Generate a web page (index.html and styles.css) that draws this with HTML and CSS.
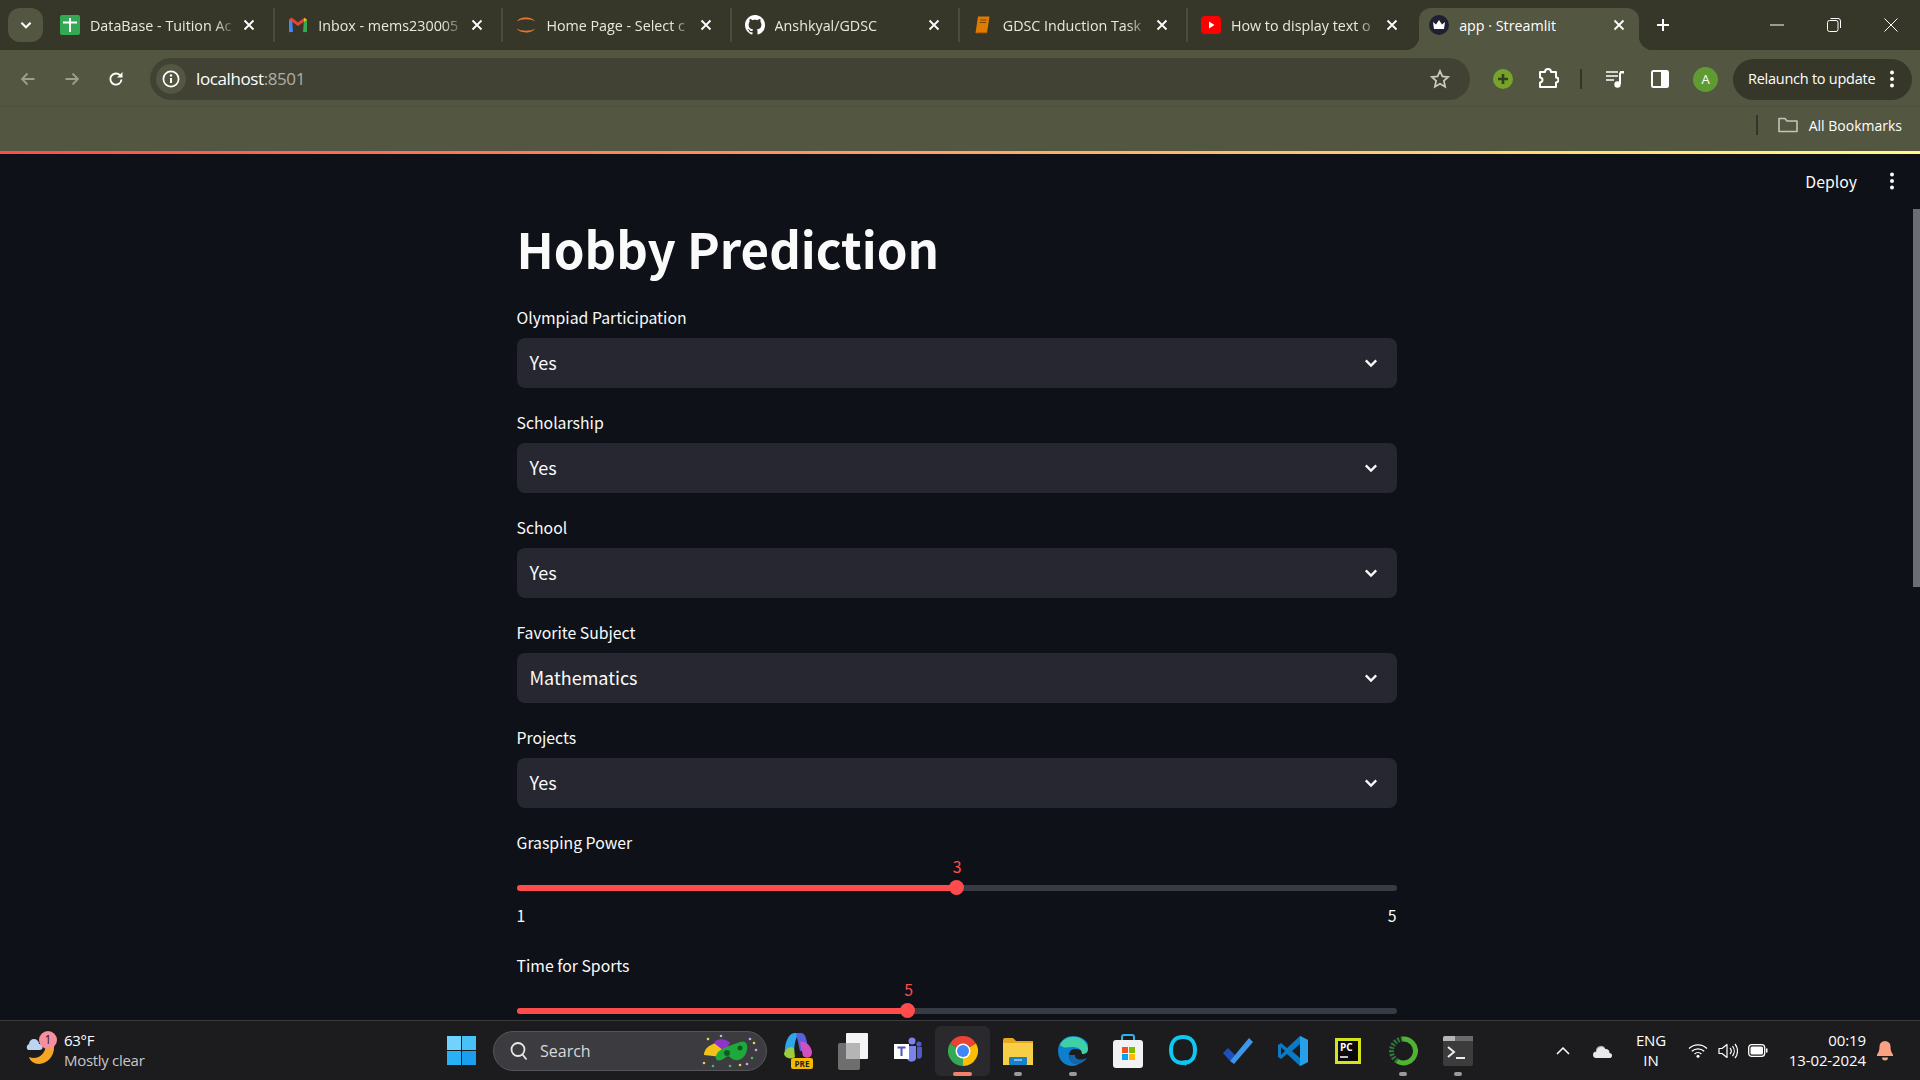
FILE: index.html
```html
<!DOCTYPE html>
<html lang="en">

<head>
    <meta charset="UTF-8">
    <title>app · Streamlit</title>
    <link rel="stylesheet" href="styles.css">
</head>

<body>
    <svg class="sprite" width="0" height="0">
        <symbol id="x" viewBox="0 0 14 14"><path d="M2.5 2.5l9 9M11.5 2.5l-9 9" fill="none" stroke="currentColor" stroke-width="1.8"/></symbol>
        <symbol id="chev" viewBox="0 0 16 16"><path d="M2.800 5.400L8 10.600l5.200-5.200" fill="none" stroke="currentColor" stroke-width="2.300"/></symbol>
        <symbol id="dots" viewBox="0 0 6 20"><circle cx="3" cy="3.5" r="2"/><circle cx="3" cy="10" r="2"/><circle cx="3" cy="16.5" r="2"/></symbol>
    </svg>

    <!-- browser chrome -->
    <div class="tabstrip">
        <div class="tabsearch">
            <svg width="14" height="14"><use href="#chev"/></svg>
        </div>
        <div class="tab">
            <svg class="favicon" viewBox="0 0 20 20"><rect width="20" height="20" rx="2" fill="#34a853"/><path d="M3 7.5h14M10 3v14" stroke="#fff" stroke-width="2"/></svg>
            <span class="tab-title">DataBase - Tuition Ac</span>
            <svg class="tab-close"><use href="#x"/></svg>
        </div>
        <div class="tab">
            <svg class="favicon" viewBox="0 0 20 20"><path d="M1 17V5l3-1.500 1 13.500H2.500A1.500 1.500 0 0 1 1 17z" fill="#4285f4"/><path d="M19 17V5l-3-1.500-1 13.500h2.500A1.500 1.500 0 0 0 19 17z" fill="#34a853"/><path d="M1 4.500L10 11l9-6.500-2.500-2-6.500 5-6.500-5z" fill="#ea4335"/><path d="M16 3l3 1.500L16 7z" fill="#fbbc04"/></svg>
            <span class="tab-title">Inbox - mems230005</span>
            <svg class="tab-close"><use href="#x"/></svg>
        </div>
        <div class="tab">
            <svg class="favicon" viewBox="0 0 20 20"><path d="M1 6.500C3 1.500 16 1 19 6.500 15 3.500 5 3.500 1 6.500zM1 13.500C3 18.500 16 19 19 13.500 15 16.500 5 16.500 1 13.500z" fill="#e8762c"/></svg>
            <span class="tab-title">Home Page - Select c</span>
            <svg class="tab-close"><use href="#x"/></svg>
        </div>
        <div class="tab">
            <svg class="favicon" viewBox="0 0 16 16"><path fill="#fff" d="M8 0C3.580 0 0 3.580 0 8c0 3.540 2.290 6.530 5.470 7.590.4.070.55-.17.55-.38 0-.19-.01-.82-.01-1.490-2.010.37-2.530-.49-2.690-.94-.09-.23-.48-.94-.82-1.130-.28-.15-.68-.52-.01-.53.63-.01 1.080.58 1.230.82.720 1.210 1.870.87 2.330.66.070-.52.280-.87.510-1.070-1.780-.2-3.640-.89-3.640-3.950 0-.87.310-1.590.820-2.150-.08-.2-.36-1.020.08-2.120 0 0 .67-.21 2.200.82.640-.18 1.320-.27 2-.27s1.360.09 2 .27c1.530-1.040 2.200-.82 2.200-.82.440 1.100.16 1.920.08 2.120.51.560.82 1.270.82 2.150 0 3.070-1.870 3.750-3.650 3.950.29.250.54.730.54 1.480 0 1.070-.01 1.930-.01 2.200 0 .21.150.46.550.38A8.010 8.010 0 0 0 16 8c0-4.420-3.580-8-8-8z"/></svg>
            <span class="tab-title">Anshkyal/GDSC</span>
            <svg class="tab-close"><use href="#x"/></svg>
        </div>
        <div class="tab">
            <svg class="favicon" viewBox="0 0 20 20"><path d="M5 1.500h11.500L14 18H2.500z" fill="#e07b00"/><path d="M4 17.500h10l.5 1H3z" fill="#8a4b00"/><path d="M7 5h6.500M6.500 7.500H13" stroke="#7a4300" stroke-width="1"/></svg>
            <span class="tab-title">GDSC Induction Task</span>
            <svg class="tab-close"><use href="#x"/></svg>
        </div>
        <div class="tab tab-last">
            <svg class="favicon" viewBox="0 0 20 20"><rect y="1" width="20" height="18" rx="4" fill="#f00"/><path d="M8 6.500v7l5.500-3.500z" fill="#fff"/></svg>
            <span class="tab-title">How to display text o</span>
            <svg class="tab-close"><use href="#x"/></svg>
        </div>
        <div class="tab tab-active">
            <svg class="favicon" viewBox="0 0 20 20"><circle cx="10" cy="10" r="10" fill="#1f2030"/><path d="M4 7l3 2.500L10 5l3 4.500L16 7l-1 7H5z" fill="#fff"/></svg>
            <span class="tab-title">app · Streamlit</span>
            <svg class="tab-close"><use href="#x"/></svg>
        </div>
        <svg class="newtab" width="14" height="14" viewBox="0 0 14 14"><path d="M7 1v12M1 7h12" stroke="#fff" stroke-width="2"/></svg>
        <div class="winbtns">
            <svg width="14" height="14" viewBox="0 0 14 14"><path d="M0 7h14" stroke="#fff" stroke-width="1"/></svg>
            <svg width="14" height="14" viewBox="0 0 14 14"><rect x=".5" y="2.500" width="10.500" height="11" rx="2" fill="none" stroke="#fff"/><path d="M3.500.5h7.500a2.500 2.500 0 0 1 2.500 2.500v7" fill="none" stroke="#fff"/></svg>
            <svg width="14" height="14" viewBox="0 0 14 14"><path d="M.5.5l13 13M13.500.5l-13 13" stroke="#fff" stroke-width="1"/></svg>
        </div>
    </div>

    <div class="toolbar">
        <div class="navbtns">
            <svg width="16" height="16" viewBox="0 0 16 16"><path d="M14.500 8H2M7.500 2.500L2 8l5.500 5.500" fill="none" stroke="#9c9e8e" stroke-width="1.800"/></svg>
            <svg width="16" height="16" viewBox="0 0 16 16"><path d="M1.500 8H14M8.500 2.500L14 8l-5.500 5.500" fill="none" stroke="#9c9e8e" stroke-width="1.800"/></svg>
            <svg width="16" height="16" viewBox="0 0 16 16"><path d="M13.500 8.500A5.600 5.600 0 1 1 12 4.200" fill="none" stroke="#fff" stroke-width="1.900"/><path d="M14.500 1v5.500H9z" fill="#fff"/></svg>
        </div>
        <div class="omnibox">
            <div class="infochip">
                <svg width="18" height="18" viewBox="0 0 18 18"><circle cx="9" cy="9" r="7.600" fill="none" stroke="#fff" stroke-width="1.700"/><path d="M9 8v5" stroke="#fff" stroke-width="2"/><circle cx="9" cy="5.400" r="1.200" fill="#fff"/></svg>
            </div>
            <span class="url">localhost<span class="url-port">:8501</span></span>
            <svg class="star" width="20" height="20" viewBox="0 0 20 20"><path d="M10 2l2.400 5.400 5.800.6-4.300 3.900 1.200 5.800L10 14.800l-5.100 2.900 1.200-5.800L1.800 8l5.800-.6z" fill="none" stroke="#c9cabd" stroke-width="1.800"/></svg>
        </div>
        <div class="actions">
            <svg class="act-ext" width="20" height="20" viewBox="0 0 20 20"><circle cx="10" cy="10" r="10" fill="#76a32a"/><path d="M10 5v10M5 10h10" stroke="#33401a" stroke-width="2.600"/></svg>
            <svg class="act-puzzle" width="22" height="22" viewBox="0 0 22 22"><path d="M3 5h5a3 3 0 0 1 6 0h5v5.500a2.500 2.500 0 0 1 0 5V20H3v-4.500a2.500 2.500 0 0 0 0-5z" fill="none" stroke="#fff" stroke-width="2" stroke-linejoin="round" transform="translate(0 -1)"/></svg>
            <span class="act-sep"></span>
            <svg class="act-media" width="20" height="20" viewBox="0 0 20 20"><path d="M1 3h12M1 7h12M1 11h8" stroke="#fff" stroke-width="1.700"/><path d="M15 3.500V15" stroke="#fff" stroke-width="2"/><path d="M15 2h4v2.500h-4z" fill="#fff"/><circle cx="12.500" cy="15.500" r="3.200" fill="#fff"/></svg>
            <svg class="act-panel" width="18" height="18" viewBox="0 0 18 18"><rect x="1" y="1" width="16" height="16" rx="1.500" fill="none" stroke="#fff" stroke-width="2"/><path d="M10 1h7v16h-7z" fill="#fff"/></svg>
            <span class="avatar">A</span>
            <div class="relaunch">
                <span class="relaunch-text">Relaunch to update</span>
                <svg width="6" height="20" fill="#fff"><use href="#dots"/></svg>
            </div>
        </div>
    </div>

    <div class="bookmarks">
        <span class="bm-sep"></span>
        <svg width="20" height="16" viewBox="0 0 20 16"><path d="M1 14.500V1.500h6l2 2.500h10v10.500z" fill="none" stroke="#c4c5b8" stroke-width="1.600" stroke-linejoin="round"/></svg>
        <span class="bm-text">All Bookmarks</span>
    </div>

    <!-- streamlit page -->
    <div class="page">
        <div class="decoration"></div>
        <div class="app">
            <div class="app-body">
                <div class="app-header">
                    <span class="deploy">Deploy</span>
                    <svg width="6" height="20" fill="#fafafa"><use href="#dots"/></svg>
                </div>
                <main class="block">
                    <h1>Hobby Prediction</h1>

                    <div class="field">
                        <label>Olympiad Participation</label>
                        <div class="select"><span>Yes</span><svg width="16" height="16"><use href="#chev"/></svg></div>
                    </div>
                    <div class="field">
                        <label>Scholarship</label>
                        <div class="select"><span>Yes</span><svg width="16" height="16"><use href="#chev"/></svg></div>
                    </div>
                    <div class="field">
                        <label>School</label>
                        <div class="select"><span>Yes</span><svg width="16" height="16"><use href="#chev"/></svg></div>
                    </div>
                    <div class="field">
                        <label>Favorite Subject</label>
                        <div class="select"><span>Mathematics</span><svg width="16" height="16"><use href="#chev"/></svg></div>
                    </div>
                    <div class="field">
                        <label>Projects</label>
                        <div class="select"><span>Yes</span><svg width="16" height="16"><use href="#chev"/></svg></div>
                    </div>

                    <div class="slider">
                        <label>Grasping Power</label>
                        <div class="track">
                            <div class="track-fill" style="width: 50%">
                                <span class="thumb-value">3</span>
                                <span class="thumb"></span>
                            </div>
                        </div>
                        <div class="ticks"><span>1</span><span>5</span></div>
                    </div>
                    <div class="slider">
                        <label>Time for Sports</label>
                        <div class="track">
                            <div class="track-fill" style="width: 44.5%">
                                <span class="thumb-value">5</span>
                                <span class="thumb"></span>
                            </div>
                        </div>
                    </div>
                </main>
            </div>
            <div class="scroll-gutter"><div class="scroll-thumb"></div></div>
        </div>
    </div>

    <!-- windows taskbar -->
    <footer class="taskbar">
        <div class="weather">
            <div class="weather-icon">
                <svg width="30" height="28" viewBox="0 0 30 28"><path d="M28 4C32 16 24 27 14 27 9 27 5 24 4 20 11 23 20 19 21 8z" fill="#f5a623"/><path d="M3 13a3.500 3.500 0 0 1 1-6 5 5 0 0 1 10 0 3 3 0 0 1 1 6H4z" fill="#bcd3f2"/></svg>
                <span class="weather-badge">1</span>
            </div>
            <div class="weather-text">
                <span>63°F</span>
                <span class="weather-sub">Mostly clear</span>
            </div>
        </div>
        <svg class="winlogo" width="29" height="29" viewBox="0 0 29 29"><rect width="14" height="14" fill="#6fd3fb"/><rect x="15" width="14" height="14" fill="#48c0f8"/><rect y="15" width="14" height="14" fill="#2ab0f5"/><rect x="15" y="15" width="14" height="14" fill="#1a9eee"/></svg>
        <div class="search">
            <svg width="18" height="20" viewBox="0 0 18 20"><circle cx="8" cy="8.500" r="6.500" fill="none" stroke="#e8e8e8" stroke-width="1.800"/><path d="M12.500 13.500l4 5" stroke="#e8e8e8" stroke-width="1.800"/></svg>
            <span>Search</span>
            <svg class="search-mask" width="62" height="36" viewBox="0 0 62 36"><path d="M4 22c0-6 5-10 12-12 4 3 8 6 6 14z" fill="#f2c21a"/><path d="M14 10c2-5 12-5 16 0l-6 8z" fill="#8e35c9"/><path d="M16 26c-1-9 10-12 24-17 6-2 8 2 7 8-2 9-9 12-15 9-2-2-3-4-6-2-3 3-8 5-10 2z" fill="#1fa83c"/><circle cx="40" cy="15" r="2.500" fill="#0e5c20"/><circle cx="27" cy="20" r="3" fill="#0e5c20"/><g fill="#c9a6e8"><circle cx="50" cy="6" r="1.300"/><circle cx="56" cy="17" r="1.300"/><circle cx="47" cy="31" r="1.300"/><circle cx="21" cy="3" r="1.300"/></g><g fill="#e8d34a"><circle cx="8" cy="6" r="1.300"/><circle cx="54" cy="10" r="1.300"/><circle cx="4" cy="30" r="1.300"/><circle cx="40" cy="32" r="1.300"/></g><g fill="#36c15a"><circle cx="13" cy="33" r="1.300"/><circle cx="52" cy="25" r="1.300"/><circle cx="30" cy="33" r="1.300"/></g></svg>
        </div>
        <div class="apps">
            <div class="app-icon">
                <svg width="32" height="38" viewBox="0 0 32 38"><path d="M3 22C2 12 6 2 12 1h6c-4 3-6 10-6 22z" fill="#2fa6e8"/><path d="M2 22c1-5 6-8 10-6l1 9c-5 3-10 1-11-3z" fill="#9ccc3c"/><path d="M14 1h5c5 0 6 8 7 18h-8z" fill="#5a5fe0"/><path d="M18 10c5-1 11 3 12 10 0 6-5 7-9 4z" fill="#d24fc0"/><rect x="9" y="26" width="22" height="11" rx="2" fill="#f5b800"/><text x="20" y="35" class="pre-text">PRE</text></svg>
            </div>
            <div class="app-icon">
                <svg width="32" height="38" viewBox="0 0 32 38"><rect x="1" y="11" width="22" height="27" rx="2" fill="#6e6e6e"/><rect x="9" y="1" width="22" height="26" rx="1" fill="#f4f4f4"/><rect x="9" y="11" width="14" height="16" fill="#b5b5b5"/></svg>
            </div>
            <div class="app-icon">
                <svg width="28" height="28" viewBox="0 0 28 28"><circle cx="18" cy="4" r="3.500" fill="#7b83eb"/><circle cx="25" cy="7" r="2.600" fill="#5059c9"/><path d="M13 9h9v13a5 5 0 0 1-9 0z" fill="#7b83eb"/><path d="M23 10h5v9a3 3 0 0 1-5 2z" fill="#5059c9"/><rect y="7" width="15" height="15" fill="#fff"/><path d="M3.500 10.500h8M7.500 10.500v8.500" stroke="#4b53bc" stroke-width="2"/></svg>
            </div>
            <div class="app-icon app-icon-active">
                <svg width="30" height="30" viewBox="0 0 30 30"><path d="M15 15L2 7.500A15 15 0 0 1 28 7.500z" fill="#ea4335"/><path d="M15 15L28 7.500A15 15 0 0 1 15 30z" fill="#fbbc04"/><path d="M15 15L15 30A15 15 0 0 1 2 7.500z" fill="#34a853"/><circle cx="15" cy="15" r="7.500" fill="#fff"/><circle cx="15" cy="15" r="6" fill="#4285f4"/></svg>
                <span class="run-dot run-dot-active"></span>
            </div>
            <div class="app-icon">
                <svg width="30" height="28" viewBox="0 0 30 28"><path d="M0 3a2 2 0 0 1 2-2h8l3 3H0z" fill="#e5a81e"/><rect y="4" width="30" height="24" fill="#f7ce46"/><rect y="4" width="30" height="2" fill="#e5a81e"/><rect x="6" y="20" width="18" height="8" rx="1" fill="#1680c8"/><path d="M11 23h8" stroke="#9bd1f5" stroke-width="1.500"/></svg>
                <span class="run-dot"></span>
            </div>
            <div class="app-icon">
                <svg width="30" height="30" viewBox="0 0 30 30"><path d="M15 0C7 0 0 6 0 15c0 10 8 15 14 15 3 0 5-1 7-2-5 1-10-3-10-9 0-3 2-6 6-6s7 1 9 3c2-1 4-3 4-7C30 5 23 0 15 0z" fill="#0e7ecf"/><path d="M2 9C5 2 14-1 22 2c6 3 8 8 8 11 0 3-2 5-6 5 0-3-2-7-9-7-5 0-9 2-13-2z" fill="#3fd0a8"/><path d="M11 19c0 6 5 10 10 9 3-1 6-3 8-6-4 2-12 3-12-3z" fill="#1565a8"/></svg>
                <span class="run-dot"></span>
            </div>
            <div class="app-icon">
                <svg width="30" height="34" viewBox="0 0 30 34"><path d="M9 7V3a2 2 0 0 1 2-2h8a2 2 0 0 1 2 2v4" fill="none" stroke="#29b5e8" stroke-width="2"/><rect y="6" width="30" height="28" rx="3" fill="#f2f2f2"/><rect x="9" y="13" width="6" height="6" fill="#f25022"/><rect x="16" y="13" width="6" height="6" fill="#7fba00"/><rect x="9" y="20" width="6" height="6" fill="#00a4ef"/><rect x="16" y="20" width="6" height="6" fill="#ffb900"/></svg>
            </div>
            <div class="app-icon">
                <svg width="30" height="32" viewBox="0 0 30 32"><path d="M15 28C7 28 3 23 3 15S7 2 15 2s12 5 12 13-4 13-12 13z" fill="none" stroke="#0dc8f0" stroke-width="4"/><path d="M12 26l7-1-1 6z" fill="#0dc8f0"/></svg>
            </div>
            <div class="app-icon">
                <svg width="30" height="26" viewBox="0 0 30 26"><path d="M0 15l5-5 7 7-5 6z" fill="#1e4fbd"/><path d="M7 23L26 0l4 4-19 22z" fill="#3d96ea"/></svg>
            </div>
            <div class="app-icon">
                <svg width="30" height="30" viewBox="0 0 30 30"><path d="M22 0l8 4v22l-8 4L9 18l-6 5-3-2v-12l3-2 6 5z" fill="#0b7ac4"/><path d="M22 0l8 4v22l-8 4z" fill="#26a0e8"/><path d="M22 8l-8 7 8 7z" fill="#1c1c1c"/><path d="M3 11v8l4-4z" fill="#1c1c1c"/></svg>
            </div>
            <div class="app-icon">
                <svg width="26" height="26" viewBox="0 0 26 26"><rect width="26" height="26" fill="#d5e21e"/><rect x="3" y="3" width="20" height="20" fill="#0a0a0a"/><text x="5" y="13" class="pc-text">PC</text><path d="M5 19h8" stroke="#fff" stroke-width="1.500"/></svg>
            </div>
            <div class="app-icon">
                <svg width="30" height="30" viewBox="0 0 30 30"><path d="M14 3a12 12 0 1 1-5 22" fill="none" stroke="#4fb233" stroke-width="5"/><path d="M9 25A12 12 0 0 1 14 3" fill="none" stroke="#2f7a3a" stroke-width="5" stroke-dasharray="2 1.500"/></svg>
                <span class="run-dot"></span>
            </div>
            <div class="app-icon">
                <svg width="30" height="30" viewBox="0 0 30 30"><rect width="30" height="30" rx="2" fill="#3c3c3c"/><path d="M0 2a2 2 0 0 1 2-2h10v5H0z" fill="#b5b5b5"/><rect x="12" width="18" height="5" fill="#6a6a6a"/><path d="M5 11l6 5-6 5" fill="none" stroke="#eee" stroke-width="2"/><path d="M13 22h9" stroke="#eee" stroke-width="2"/></svg>
                <span class="run-dot"></span>
            </div>
        </div>
        <div class="tray">
            <svg class="tray-caret" width="14" height="8" viewBox="0 0 14 8"><path d="M1 7l6-6 6 6" fill="none" stroke="#fff" stroke-width="1.500"/></svg>
            <svg class="tray-cloud" width="20" height="14" viewBox="0 0 20 14"><path d="M3 13.500A3 3 0 0 1 3 7.500 5 5 0 0 1 12 4l-6 9.500z" fill="#aaa"/><path d="M3 14a3 3 0 0 1 .5-6 5 5 0 0 1 9-3 4 4 0 0 1 4 4 2.600 2.600 0 0 1 1 5z" fill="#e9e9e9"/></svg>
            <div class="lang"><span>ENG</span><span>IN</span></div>
            <svg class="tray-wifi" width="20" height="15" viewBox="0 0 20 15"><path d="M1 5.500a13 13 0 0 1 18 0M3.800 8.300a9 9 0 0 1 12.400 0M6.600 11a5 5 0 0 1 6.800 0" fill="none" stroke="#fff" stroke-width="1.300"/><circle cx="10" cy="13.300" r="1.500" fill="#fff"/></svg>
            <svg class="tray-sound" width="20" height="16" viewBox="0 0 20 16"><path d="M1 5.500h3L9 1.500v13l-5-4H1z" fill="none" stroke="#fff" stroke-width="1.200" stroke-linejoin="round"/><path d="M12 5a4.500 4.500 0 0 1 0 6M14.500 3a8 8 0 0 1 0 10M17 1a11 11 0 0 1 0 14" fill="none" stroke="#fff" stroke-width="1.200"/></svg>
            <svg class="tray-batt" width="20" height="13" viewBox="0 0 20 13"><rect x=".7" y=".7" width="16" height="11.600" rx="3" fill="none" stroke="#fff" stroke-width="1.300"/><rect x="2.500" y="2.500" width="12.500" height="8" rx="1.500" fill="#fff"/><path d="M18 4.500h1.500v4H18z" fill="#fff"/></svg>
            <div class="clock"><span>00:19</span><span>13-02-2024</span></div>
            <svg class="tray-bell" width="16" height="20" viewBox="0 0 16 20"><path d="M8 0a5.500 5.500 0 0 1 5.500 5.500c0 4 1 6 2.500 8v1.500H0v-1.500c1.500-2 2.500-4 2.500-8A5.500 5.500 0 0 1 8 0z" fill="#f8a283"/><path d="M5 16.500h6a3 3 0 0 1-6 0z" fill="#f8a283"/></svg>
        </div>
    </footer>
</body>

</html>
```

FILE: styles.css
```css
* {
    box-sizing: border-box;
}

html, body {
    margin: 0;
    height: 1080px;
    overflow: hidden;
}

body {
    display: flex;
    flex-direction: column;
    background-color: #0e1117;
    color: #fff;
    font-family: "Open Sans", "Noto Sans", sans-serif;
}

.sprite {
    position: absolute;
}

svg {
    flex: none;
    display: block;
}

/* tabs */
.tabstrip {
    display: flex;
    align-items: center;
    height: 50px;
    background-color: #363729;
}

.tabsearch {
    display: flex;
    align-items: center;
    justify-content: center;
    width: 35px;
    height: 34px;
    margin: 0 4px 0 8px;
    border-radius: 12px;
    background-color: #535640;
    color: #fff;
}

.tab {
    display: flex;
    align-items: center;
    width: 228.200px;
    height: 34px;
    padding: 0 17px 0 13px;
    border-right: 2px solid #4b4d3a;
    color: #e8e9de;
}

.tab-last {
    border-right: none;
}

.tab-active {
    position: relative;
    align-self: flex-end;
    width: 220px;
    height: 42px;
    margin-left: 3px;
    padding: 0 13px 8px 10px;
    border-right: none;
    border-radius: 12px 12px 0 0;
    background-color: #535640;
    color: #fff;
}

.tab-active::before,
.tab-active::after {
    content: "";
    position: absolute;
    bottom: 0;
    width: 14px;
    height: 14px;
}

.tab-active::before {
    left: -14px;
    background: radial-gradient(circle at 0 0, transparent 14px, #535640 14.500px);
}

.tab-active::after {
    right: -14px;
    background: radial-gradient(circle at 100% 0, transparent 14px, #535640 14.500px);
}

.favicon {
    width: 20px;
    height: 20px;
}

.tab-title {
    flex: 1;
    min-width: 0;
    margin-left: 10px;
    overflow: hidden;
    white-space: nowrap;
    font-size: 14.300px;
    -webkit-mask-image: linear-gradient(90deg, #000 82%, transparent 97%);
    mask-image: linear-gradient(90deg, #000 82%, transparent 97%);
}

.tab-active .tab-title {
    -webkit-mask-image: none;
    mask-image: none;
}

.tab-close {
    width: 14px;
    height: 14px;
    color: #fff;
}

.newtab {
    margin-left: 17px;
}

.winbtns {
    display: flex;
    gap: 43px;
    margin-left: auto;
    padding-right: 22px;
}

/* toolbar */
.toolbar {
    display: flex;
    align-items: center;
    height: 57px;
    padding-top: 2px;
    background-color: #535640;
    border-bottom: 1px solid #4e513c;
}

.navbtns {
    display: flex;
    gap: 28px;
    width: 150px;
    padding-left: 20px;
}

.omnibox {
    display: flex;
    align-items: center;
    width: 1320px;
    height: 42px;
    padding: 0 20px 0 6px;
    border-radius: 21px;
    background-color: #414234;
}

.infochip {
    display: flex;
    align-items: center;
    justify-content: center;
    width: 30px;
    height: 30px;
    border-radius: 50%;
    background-color: #535640;
}

.url {
    margin-left: 10px;
    padding-bottom: 1px;
    font-size: 17px;
    letter-spacing: -0.4px;
}

.url-port {
    color: #aeafa3;
}

.star {
    margin-left: auto;
}

.actions {
    display: flex;
    align-items: center;
    flex: 1;
}

.act-ext {
    margin-left: 23px;
}

.act-puzzle {
    margin-left: 24px;
}

.act-sep {
    width: 2px;
    height: 20px;
    margin-left: 21px;
    background-color: #33352a;
}

.act-media {
    margin-left: 23px;
}

.act-panel {
    margin-left: 26px;
}

.avatar {
    display: flex;
    align-items: center;
    justify-content: center;
    width: 25px;
    height: 25px;
    margin-left: 24px;
    border-radius: 50%;
    background-color: #5f9b32;
    font-size: 13px;
}

.relaunch {
    display: flex;
    align-items: center;
    justify-content: space-between;
    width: 179px;
    height: 41px;
    margin-left: 15px;
    padding: 0 17px 0 15px;
    border-radius: 21px;
    background-color: #363729;
    font-size: 14.500px;
    letter-spacing: -0.25px;
}

.relaunch-text {
    padding-bottom: 2px;
}

.bookmarks {
    display: flex;
    align-items: center;
    justify-content: flex-end;
    height: 44px;
    padding: 0 18px 8px 0;
    background-color: #535640;
}

.bm-sep {
    width: 2px;
    height: 20px;
    margin-right: 20px;
    background-color: #33352a;
}

.bm-text {
    margin-left: 11px;
    font-size: 14px;
}

/* page */
.page {
    display: flex;
    flex-direction: column;
    flex: 1;
    min-height: 0;
    font-family: "Noto Sans CJK SC", "Source Sans Pro", sans-serif;
    color: #fafafa;
}

.decoration {
    height: 3px;
    background-image: linear-gradient(90deg, #ff4b4b, #fffd80);
}

.app {
    display: flex;
    flex: 1;
    min-height: 0;
}

.app-body {
    flex: 1;
    min-width: 0;
}

.app-header {
    display: flex;
    align-items: center;
    justify-content: flex-end;
    gap: 32px;
    height: 54px;
    padding-right: 18px;
}

.deploy {
    font-size: 15.800px;
}

.block {
    width: 880px;
    margin: 0 auto;
}

h1 {
    height: 95px;
    margin: 0;
    font-size: 49.200px;
    font-weight: 700;
    line-height: 80px;
}

label {
    display: block;
    height: 30px;
    margin-bottom: 5px;
    font-size: 15.800px;
    line-height: 30px;
}

.field {
    margin-bottom: 20px;
}

.select {
    display: flex;
    align-items: center;
    justify-content: space-between;
    height: 50px;
    padding: 0 18px 0 13px;
    border-radius: 8px;
    background-color: #262730;
    font-size: 18px;
}

.select span {
    padding-bottom: 2px;
}

.slider {
    padding-bottom: 23px;
}

.slider label {
    margin-bottom: 0;
}

.track {
    height: 6px;
    margin-top: 27px;
    border-radius: 3px;
    background-color: #383a44;
}

.track-fill {
    position: relative;
    height: 100%;
    border-radius: 3px 0 0 3px;
    background-color: #ff4b4b;
}

.thumb {
    position: absolute;
    right: -7px;
    top: -5px;
    width: 15px;
    height: 15px;
    border-radius: 50%;
    background-color: #ff4b4b;
}

.thumb-value {
    position: absolute;
    right: -5px;
    top: -30px;
    color: #ff4b4b;
    font-size: 15.800px;
    line-height: 24px;
}

.ticks {
    display: flex;
    justify-content: space-between;
    height: 24px;
    margin-top: 13px;
    font-size: 15.800px;
    line-height: 24px;
}

.scroll-gutter {
    width: 7px;
    padding-top: 55px;
}

.scroll-thumb {
    height: 378px;
    background-color: #6d6e73;
}

/* taskbar */
.taskbar {
    display: flex;
    align-items: center;
    flex: none;
    height: 60px;
    border-top: 1px solid #3b3b3b;
    background-color: #1c1c1e;
    color: #fff;
}

.weather {
    display: flex;
    align-items: center;
    width: 447px;
    padding-left: 25px;
}

.weather-icon {
    position: relative;
    width: 39px;
}

.weather-badge {
    position: absolute;
    top: -6px;
    left: 14px;
    width: 18px;
    height: 18px;
    border-radius: 50%;
    background-color: #f88f9e;
    color: #222;
    font-size: 12px;
    line-height: 18px;
    text-align: center;
}

.weather-text {
    display: flex;
    flex-direction: column;
    padding-bottom: 2px;
    font-size: 15px;
    line-height: 20px;
    letter-spacing: -0.3px;
}

.weather-sub {
    color: #c8c8c8;
}

.winlogo {
    margin-right: 17px;
}

.search {
    display: flex;
    align-items: center;
    width: 274px;
    height: 40px;
    margin-right: 3px;
    padding: 0 4px 0 16px;
    border: 1px solid #55555a;
    border-radius: 20px;
    background-color: #3c3c40;
    font-size: 16px;
    color: #d8d8d8;
}

.search span {
    margin-left: 12px;
}

.search-mask {
    margin-left: auto;
}

.apps {
    display: flex;
}

.app-icon {
    position: relative;
    display: flex;
    align-items: center;
    justify-content: center;
    width: 55px;
    height: 50px;
}

.app-icon-active {
    border-radius: 6px;
    background-color: #2a2a2e;
}

.run-dot {
    position: absolute;
    bottom: 0;
    left: 24px;
    width: 8px;
    height: 4px;
    border-radius: 2px;
    background-color: #9a9a9a;
}

.run-dot-active {
    left: 18px;
    width: 19px;
    background-color: #f0826c;
}

.pre-text {
    font-size: 8px;
    font-weight: 700;
    fill: #222;
    text-anchor: middle;
}

.pc-text {
    font-size: 10px;
    font-weight: 700;
    fill: #fff;
}

.tray {
    display: flex;
    align-items: center;
    flex: 1;
    font-size: 15px;
    letter-spacing: -0.1px;
}

.tray-caret {
    margin-left: 71px;
}

.tray-cloud {
    margin-left: 23px;
}

.lang {
    display: flex;
    flex-direction: column;
    align-items: center;
    width: 40px;
    margin-left: 18px;
    padding-bottom: 2px;
    line-height: 20px;
}

.tray-wifi {
    margin-left: 17px;
}

.tray-sound {
    margin-left: 10px;
}

.tray-batt {
    margin-left: 10px;
}

.clock {
    display: flex;
    flex-direction: column;
    align-items: flex-end;
    width: 98px;
    padding-bottom: 2px;
    line-height: 20px;
}

.tray-bell {
    margin-left: 11px;
}
```
